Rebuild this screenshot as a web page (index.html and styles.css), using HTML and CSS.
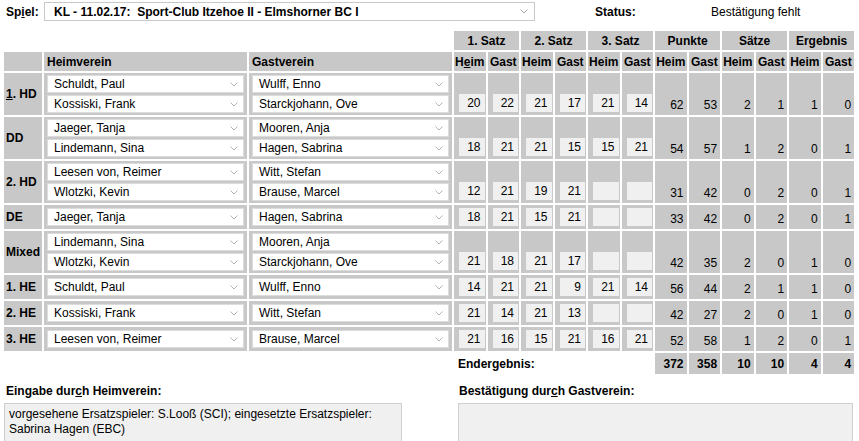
FILE: index.html
```html
<!DOCTYPE html>
<html lang="de">
<head>
<meta charset="utf-8">
<title>Spielbericht</title>
<link rel="stylesheet" href="styles.css">
</head>
<body>
<div class="topbar">
  <span class="spiel-lbl">Sp<u>i</u>el:</span>
  <div class="sel sel-top"><span class="sel-text">KL - 11.02.17:&nbsp; Sport-Club Itzehoe II - Elmshorner BC I</span><svg class="chev" width="8" height="5" viewBox="0 0 8 5"><path d="M0.5 0.5 L4 4 L7.5 0.5" fill="none" stroke="#a8a8a8" stroke-width="1"/></svg></div>
  <span class="status-lbl">Status:</span>
  <span class="status-val">Bestätigung fehlt</span>
</div>

<table class="grid">
  <colgroup>
    <col class="c-lbl"><col class="c-team"><col class="c-team">
    <col class="c-num"><col class="c-num"><col class="c-num"><col class="c-num">
    <col class="c-num"><col class="c-num"><col class="c-num"><col class="c-num">
    <col class="c-num"><col class="c-num"><col class="c-num"><col class="c-num">
  </colgroup>
  <thead>
    <tr class="h1">
      <th class="blank" colspan="3"></th>
      <th colspan="2">1. Satz</th><th colspan="2">2. Satz</th><th colspan="2">3. Satz</th>
      <th colspan="2">Punkte</th><th colspan="2">Sätze</th><th colspan="2">Ergebnis</th>
    </tr>
    <tr class="h2">
      <th></th><th class="left">Heimverein</th><th class="left">Gastverein</th>
      <th>H<u>e</u>im</th><th>Gast</th><th>Heim</th><th>Gast</th><th>Heim</th><th>Gast</th>
      <th>Heim</th><th>Gast</th><th>Heim</th><th>Gast</th><th>Heim</th><th>Gast</th>
    </tr>
  </thead>
  <tbody id="rows"></tbody>
  <tfoot>
    <tr class="total">
      <td colspan="3"></td>
      <td colspan="6" class="endlbl">Endergebnis:</td>
      <td class="tot">372</td><td class="tot">358</td><td class="tot">10</td><td class="tot">10</td><td class="tot">4</td><td class="tot">4</td>
    </tr>
  </tfoot>
</table>

<div class="notes">
  <div class="note">
    <div class="note-lbl">Eingabe dur<u>c</u>h Heimverein:</div>
    <div class="ta">vorgesehene Ersatzspieler: S.Looß (SCI); eingesetzte Ersatzspieler: Sabrina Hagen (EBC)</div>
  </div>
  <div class="note note-right">
    <div class="note-lbl">Bestätigung dur<u>c</u>h Gastverein:</div>
    <div class="ta"></div>
  </div>
</div>
<script src="app.js"></script>
</body>
</html>
```

FILE: app.js
```js
var data = [
  { lbl: '<u>1</u>. HD', h: ['Schuldt, Paul', 'Kossiski, Frank'], g: ['Wulff, Enno', 'Starckjohann, Ove'], s: ['20','22','21','17','21','14'], p: ['62','53','2','1','1','0'] },
  { lbl: 'DD', h: ['Jaeger, Tanja', 'Lindemann, Sina'], g: ['Mooren, Anja', 'Hagen, Sabrina'], s: ['18','21','21','15','15','21'], p: ['54','57','1','2','0','1'] },
  { lbl: '2. HD', h: ['Leesen von, Reimer', 'Wlotzki, Kevin'], g: ['Witt, Stefan', 'Brause, Marcel'], s: ['12','21','19','21','',''], p: ['31','42','0','2','0','1'] },
  { lbl: 'DE', h: ['Jaeger, Tanja'], g: ['Hagen, Sabrina'], s: ['18','21','15','21','',''], p: ['33','42','0','2','0','1'] },
  { lbl: 'Mixed', h: ['Lindemann, Sina', 'Wlotzki, Kevin'], g: ['Mooren, Anja', 'Starckjohann, Ove'], s: ['21','18','21','17','',''], p: ['42','35','2','0','1','0'] },
  { lbl: '1. HE', h: ['Schuldt, Paul'], g: ['Wulff, Enno'], s: ['14','21','21','9','21','14'], p: ['56','44','2','1','1','0'] },
  { lbl: '2. HE', h: ['Kossiski, Frank'], g: ['Witt, Stefan'], s: ['21','14','21','13','',''], p: ['42','27','2','0','1','0'] },
  { lbl: '3. HE', h: ['Leesen von, Reimer'], g: ['Brause, Marcel'], s: ['21','16','15','21','16','21'], p: ['52','58','1','2','0','1'] }
];
var chev = '<svg class="chev" width="8" height="5" viewBox="0 0 8 5"><path d="M0.5 0.5 L4 4 L7.5 0.5" fill="none" stroke="#b4b4b4" stroke-width="1"/></svg>';
function sel(name) { return '<div class="sel"><span class="sel-text">' + name + '</span>' + chev + '</div>'; }
var html = '';
data.forEach(function (r) {
  var cls = r.h.length > 1 ? 'dbl' : 'sgl';
  html += '<tr class="' + cls + '"><th class="disc">' + r.lbl + '</th>';
  html += '<td class="team">' + r.h.map(sel).join('') + '</td>';
  html += '<td class="team">' + r.g.map(sel).join('') + '</td>';
  r.s.forEach(function (v) { html += '<td class="sc"><div class="inp">' + v + '</div></td>'; });
  r.p.forEach(function (v) { html += '<td class="pt">' + v + '</td>'; });
  html += '</tr>';
});
document.getElementById('rows').innerHTML = html;
```

FILE: styles.css
```css
html, body {
  margin: 0;
  padding: 0;
  background: #fff;
}
body {
  font-family: "Liberation Sans", Arial, sans-serif;
  font-size: 12px;
  color: #000;
}
u { text-decoration: underline; }

.topbar {
  display: flex;
  align-items: center;
  height: 19px;
  margin: 2px 0 0 4px;
}
.spiel-lbl {
  width: 40px;
  padding-left: 2px;
  box-sizing: border-box;
  font-weight: bold;
}
.sel {
  display: flex;
  align-items: center;
  justify-content: space-between;
  box-sizing: border-box;
  height: 18px;
  background: #fff;
  border: 1px solid #dcdcdc;
  padding: 0 5px 0 6px;
  white-space: nowrap;
}
.sel + .sel { margin-top: 2px; }
.sel-top {
  width: 491px;
  height: 19px;
  border-color: #c8c8c8;
  padding-left: 9px;
  padding-right: 6px;
  font-weight: bold;
}
.sel-text { white-space: pre; }
.chev { flex: none; }
.status-lbl {
  margin-left: 60px;
  width: 116px;
  font-weight: bold;
}

.grid {
  margin-top: 8px;
  margin-left: 2px;
  border-collapse: separate;
  border-spacing: 2px;
  table-layout: fixed;
  width: 854px;
}
.c-lbl { width: 38px; }
.c-team { width: 203px; }
.c-num { width: 31.5px; }

.grid th, .grid td {
  padding: 0;
  font-size: 12px;
}
.grid thead tr { height: 19px; }
.grid thead th {
  background: #c8c8c8;
  font-weight: bold;
  text-align: center;
  white-space: nowrap;
  line-height: 14px;
}
.grid thead th.blank { background: transparent; }
.grid thead th.left { text-align: left; padding-left: 3px; }

.grid tr.dbl { height: 42px; }
.grid tr.sgl { height: 24px; }

.grid th.disc {
  background: #c8c8c8;
  font-weight: bold;
  text-align: left;
  padding-left: 2px;
  vertical-align: middle;
  white-space: nowrap;
  line-height: 14px;
}
.grid td.team {
  background: #c8c8c8;
  padding: 0 3px;
  vertical-align: middle;
}
.grid td.sc {
  background: #c8c8c8;
  vertical-align: bottom;
  padding: 0 1px 3px 5px;
}
.inp {
  height: 18px;
  line-height: 18px;
  background: #f0f0f0;
  text-align: right;
  padding-right: 4px;
}
.grid td.pt {
  background: #c8c8c8;
  vertical-align: bottom;
  text-align: right;
  padding: 0 3px 3px 0;
  line-height: 14px;
}

.grid tr.total { height: 21px; }
.grid td.endlbl {
  font-weight: bold;
  padding-left: 4px;
  padding-top: 1px;
  text-align: left;
}
.grid td.tot {
  background: #c8c8c8;
  font-weight: bold;
  text-align: right;
  padding-right: 3px;
  padding-top: 1px;
}

.notes {
  display: grid;
  grid-template-columns: 398px 395px;
  column-gap: 56px;
  margin: 8px 0 0 4px;
}
.note-lbl {
  font-weight: bold;
  padding-left: 2px;
  line-height: 14px;
  margin-bottom: 5px;
}
.note-right .note-lbl { padding-left: 1px; }
.ta {
  box-sizing: border-box;
  height: 42px;
  background: #f0f0f0;
  border: 1px solid #cfcfcf;
  padding: 3px 4px;
  line-height: 15px;
}
```
